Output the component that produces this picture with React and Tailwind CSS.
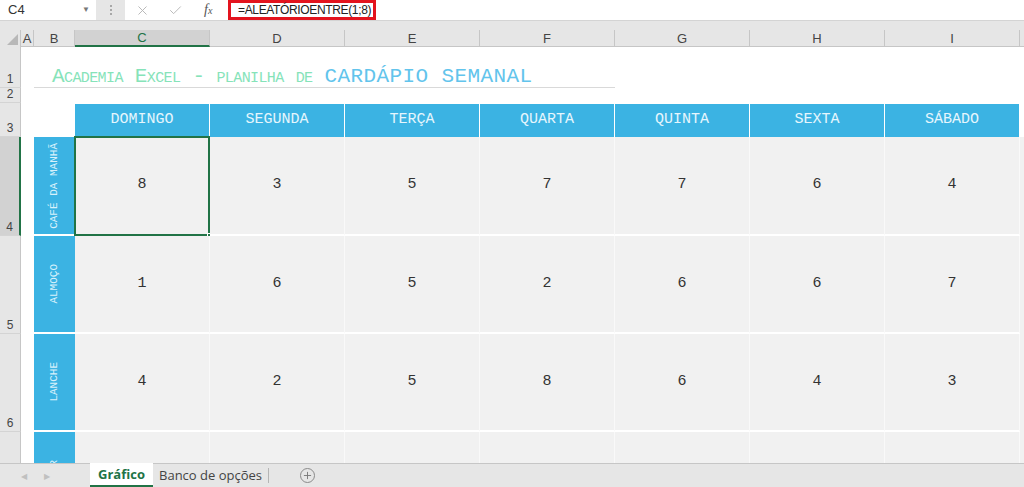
import { X, Check, Plus } from 'lucide-react';

const days = ['DOMINGO', 'SEGUNDA', 'TERÇA', 'QUARTA', 'QUINTA', 'SEXTA', 'SÁBADO'];
const cols = ['C', 'D', 'E', 'F', 'G', 'H', 'I'];

const meals = [
    { label: 'CAFÉ DA MANHÃ', row: 4, h: 'h-[99px]', values: [8, 3, 5, 7, 7, 6, 4] },
    { label: 'ALMOÇO', row: 5, h: 'h-[98px]', values: [1, 6, 5, 2, 6, 6, 7] },
    { label: 'LANCHE', row: 6, h: 'h-[98px]', values: [4, 2, 5, 8, 6, 4, 3] },
    { label: 'JANTAR', row: 7, h: 'h-[98px]', values: [null, null, null, null, null, null, null] },
];

const RowHeader = ({ n, active }) => (
    <div className={`w-[21px] shrink-0 flex items-end justify-center pb-[2px] text-[12px] leading-none border-b border-r ${active ? 'bg-[#d2d2d2] border-r-[#217346] border-r-2 text-[#444]' : 'bg-[#e6e6e6] border-r-[#c6c6c6] text-[#444]'} border-b-[#d4d4d4]`}>
        {n}
    </div>
);

const FormulaBar = () => (
    <div className="h-[21px] shrink-0 flex bg-[#e6e6e6] border-b border-[#d4d4d4]">
        <div className="w-[96px] bg-white flex items-center justify-between pl-[8px] pr-[6px] text-[13px] text-[#333]">
            <span>C4</span>
            <span className="text-[8px] text-[#777]">▼</span>
        </div>
        <div className="w-[29px] flex flex-col items-center justify-center gap-[2px]">
            <span className="w-[2px] h-[2px] bg-[#a8a8a8]" />
            <span className="w-[2px] h-[2px] bg-[#a8a8a8]" />
            <span className="w-[2px] h-[2px] bg-[#a8a8a8]" />
        </div>
        <div className="flex-1 bg-white flex items-center">
            <div className="w-[100px] flex items-center pl-[10px] text-[#b5b5b5]">
                <X size={15} strokeWidth={1.5} />
                <Check size={15} strokeWidth={1.5} className="ml-[18px]" />
                <span className="ml-[21px] font-['Liberation_Serif'] italic text-[14px] text-[#555] leading-none">f<span className="text-[10px]">x</span></span>
            </div>
            <div className="ml-[3px] h-[20px] w-[148px] border-[3px] border-[#e3141e] flex items-center pl-[7px] text-[12px] tracking-[-0.35px] text-[#222] leading-none whitespace-nowrap">
                =ALEATÓRIOENTRE(1;8)
            </div>
        </div>
    </div>
);

const ColumnHeaders = () => (
    <div className="h-[17px] shrink-0 flex bg-[#e6e6e6] text-[13px] text-[#444] leading-none">
        <div className="w-[21px] shrink-0 flex items-end justify-end pr-[2px] pb-[2px] border-r border-[#c6c6c6]">
            <div className="w-0 h-0 border-l-[11px] border-l-transparent border-b-[11px] border-b-[#b8b8b8]" />
        </div>
        <div className="w-[13px] shrink-0 flex items-center justify-center border-r border-[#c6c6c6] border-b border-b-[#c6c6c6]">A</div>
        <div className="w-[41px] shrink-0 flex items-center justify-center border-r border-[#c6c6c6] border-b border-b-[#c6c6c6]">B</div>
        {cols.map((c, i) => (
            <div
                key={c}
                className={`w-[135px] shrink-0 flex items-center justify-center border-r ${i === 0 ? 'bg-[#d2d2d2] text-[#217346] border-b-2 border-b-[#217346] border-r-[#c6c6c6]' : 'border-r-[#c6c6c6] border-b border-b-[#c6c6c6]'}`}
            >
                {c}
            </div>
        ))}
        <div className="flex-1 border-b border-[#c6c6c6]" />
    </div>
);

const TitleRow = () => (
    <div className="h-[41px] shrink-0 flex">
        <RowHeader n={1} />
        <div className="w-[13px] shrink-0" />
        <div className="w-[581px] shrink-0 flex items-end pl-[18px] pb-[1px] border-b border-[#d9d9d9] font-['Liberation_Mono'] text-[21px] leading-[18px] whitespace-nowrap">
            <span className="text-[#86e3b9] [font-variant:small-caps] tracking-[-0.6px]">Academia Excel - planilha de&nbsp;</span>
            <span className="text-[#62c4ec] tracking-[0.4px]">CARDÁPIO SEMANAL</span>
        </div>
    </div>
);

const DayHeaderRow = () => (
    <div className="h-[34px] shrink-0 flex">
        <RowHeader n={3} />
        <div className="w-[54px] shrink-0" />
        {days.map((d) => (
            <div key={d} className="w-[135px] shrink-0 pt-[1px]">
                <div className="h-full bg-[#3bb3e3] border-r border-white flex items-center justify-center font-['Liberation_Mono'] text-[15px] text-[#e6f6fd]">
                    {d}
                </div>
            </div>
        ))}
    </div>
);

const MealRow = ({ meal }) => (
    <div className={`${meal.h} shrink-0 flex`}>
        <RowHeader n={meal.row} active={meal.row === 4} />
        <div className="w-[13px] shrink-0" />
        <div className="w-[41px] shrink-0 bg-[#3bb3e3] border-b-2 border-white flex items-center justify-center">
            <span className="[writing-mode:vertical-rl] rotate-180 font-['Liberation_Mono'] text-[11px] text-[#d8f1fb] whitespace-nowrap">
                {meal.label}
            </span>
        </div>
        {meal.values.map((v, i) => (
            <div
                key={i}
                className="relative w-[135px] shrink-0 bg-[#f1f1f1] border-r border-[#f9f9f9] border-b-2 border-b-white flex items-center justify-center font-['Liberation_Mono'] text-[15px] text-[#333]"
            >
                {v}
                {meal.row === 4 && i === 0 && (
                    <>
                        <div className="absolute -left-px -top-px -right-px -bottom-[2px] border-2 border-[#217346]" />
                        <div className="absolute -right-[4px] -bottom-[5px] w-[6px] h-[6px] bg-[#217346] border border-white" />
                    </>
                )}
            </div>
        ))}
        <div className="flex-1 bg-[#f1f1f1]" />
    </div>
);

const TabBar = () => (
    <div className="h-[24px] shrink-0 flex items-stretch bg-[#e6e6e6] border-t border-[#c6c6c6] text-[13px] font-['Open_Sans'] leading-none">
        <div className="w-[90px] flex items-center pl-[21px] gap-[17px] text-[8px] text-[#c0c0c0]">
            <span>◀</span>
            <span>▶</span>
        </div>
        <div className="w-[63px] -mt-px bg-white border-b-2 border-[#217346] flex items-center justify-center font-bold text-[#217346]">
            Gráfico
        </div>
        <div className="w-[115px] flex items-center justify-center text-[#444]">Banco de opções</div>
        <div className="w-px my-[4px] bg-[#b5b5b5]" />
        <div className="w-[76px] flex items-center justify-center">
            <div className="w-[15px] h-[15px] rounded-full border border-[#8a8a8a] flex items-center justify-center text-[#777]">
                <Plus size={11} strokeWidth={2} />
            </div>
        </div>
        <div className="flex-1" />
    </div>
);

const App = () => (
    <div className="w-[1024px] h-[487px] overflow-hidden flex flex-col bg-white font-['Liberation_Sans']">
        <FormulaBar />
        <div className="h-[9px] shrink-0 bg-[#e6e6e6]" />
        <ColumnHeaders />
        <div className="flex-1 overflow-hidden flex flex-col">
            <TitleRow />
            <div className="h-[15px] shrink-0 flex">
                <RowHeader n={2} />
            </div>
            <DayHeaderRow />
            {meals.map((m) => (
                <MealRow key={m.row} meal={m} />
            ))}
        </div>
        <TabBar />
    </div>
);

export default App;
